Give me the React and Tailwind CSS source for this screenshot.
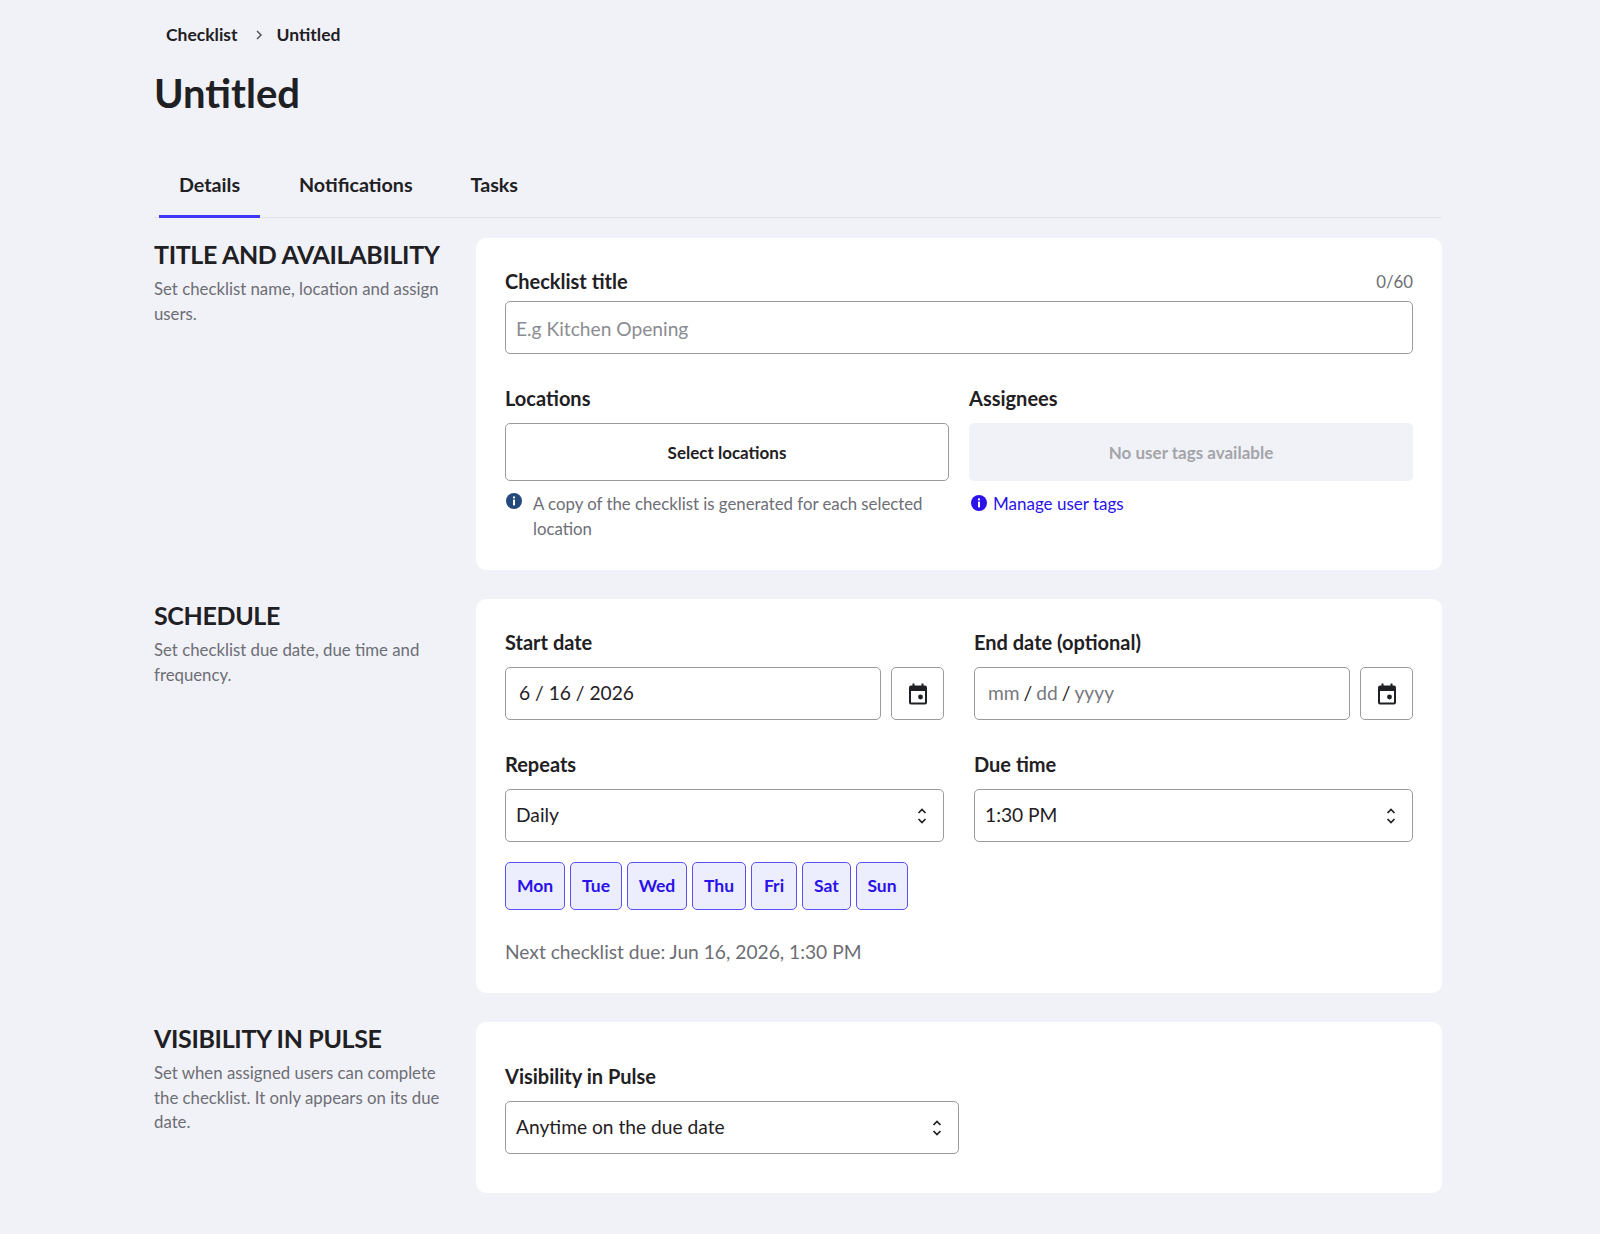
const days = [
  ['Mon', 'w-[60px]'],
  ['Tue', 'w-[52px]'],
  ['Wed', 'w-[60px]'],
  ['Thu', 'w-[54px]'],
  ['Fri', 'w-[46px]'],
  ['Sat', 'w-[49px]'],
  ['Sun', 'w-[52px]'],
];

const InfoIcon = ({ color }) => (
  <svg width="18" height="18" viewBox="0 0 18 18" className="shrink-0">
    <circle cx="9" cy="9" r="8" fill={color} />
    <circle cx="9" cy="5.4" r="1.1" fill="#fff" />
    <rect x="8" y="7.6" width="2" height="5.8" fill="#fff" />
  </svg>
);

const CalendarIcon = () => (
  <svg width="20" height="22" viewBox="0 0 20 22">
    <rect x="4.5" y="0.5" width="2" height="4" fill="#1f2024" />
    <rect x="13.5" y="0.5" width="2" height="4" fill="#1f2024" />
    <rect x="1" y="2.5" width="18" height="19" rx="2" fill="#1f2024" />
    <rect x="3" y="8" width="14" height="11.5" fill="#fff" />
    <circle cx="12.5" cy="14" r="2.4" fill="#1f2024" />
  </svg>
);

const UpDownIcon = () => (
  <svg width="10" height="18" viewBox="0 0 10 18" fill="none" stroke="#1f2024" strokeWidth="1.7">
    <path d="M1.5 6 5 2.5 8.5 6" />
    <path d="M1.5 12 5 15.5 8.5 12" />
  </svg>
);

const Label = ({ children }) => (
  <label className="block pb-[2px] text-[20px] leading-[26px] font-bold text-[#1f2024]">{children}</label>
);

const Select = ({ value, className }) => (
  <div className={`flex h-[53px] items-center justify-between rounded-[5px] border border-[#9b9b9f] bg-white pl-[10px] pr-[16px] text-[19.2px] text-[#1f2024] ${className}`}>
    <span>{value}</span>
    <UpDownIcon />
  </div>
);

const DateField = ({ children }) => (
  <div className="flex gap-[10px]">
    <div className="flex h-[53px] flex-1 items-center rounded-[5px] border border-[#9b9b9f] bg-white pl-[13px] text-[19.2px] text-[#1f2024]">
      {children}
    </div>
    <button className="flex h-[53px] w-[53px] items-center justify-center rounded-[5px] border border-[#9b9b9f] bg-white">
      <CalendarIcon />
    </button>
  </div>
);

const Section = ({ title, text, className, children }) => (
  <section className="flex">
    <div className="w-[322px] shrink-0 pr-[30px]">
      <h2 className="text-[25px] leading-[33px] font-bold tracking-[-0.35px] text-[#1f2024] whitespace-nowrap uppercase">{title}</h2>
      <p className="mt-[6px] text-[16.8px] leading-[24.5px] text-[#6d6e75]">{text}</p>
    </div>
    <div className={`flex-1 rounded-[10px] bg-white px-[29px] ${className}`}>{children}</div>
  </section>
);

export default function App() {
  return (
    <div className="min-h-[1234px] bg-[#f1f2f7] pl-[154px] pr-[158px] pt-[20px] font-['Lato',sans-serif]">
      <nav className="flex h-[30px] items-center pl-[12px] text-[17.5px] font-bold text-[#1f2024]">
        <span>Checklist</span>
        <svg width="10" height="12" viewBox="0 0 10 12" fill="none" stroke="#55565c" strokeWidth="1.5" className="ml-[16px] mr-[13px]">
          <path d="M3 2l4 4-4 4" />
        </svg>
        <span>Untitled</span>
      </nav>
      <h1 className="mt-[18px] text-[40px] leading-[50px] font-bold text-[#1f2024]">Untitled</h1>

      <div className="mt-[42px] flex h-[58px] border-b border-[#e2e3e9] pl-[5px] text-[19.7px] font-bold text-[#1f2024]">
        <div className="-mb-px flex w-[101px] justify-center rounded-t-[2px] border-b-[3px] border-[#4038f6] pt-[10px]">Details</div>
        <div className="ml-[39px] pt-[10px]">Notifications</div>
        <div className="ml-[58px] pt-[10px]">Tasks</div>
      </div>

      <div className="mt-[20px] flex flex-col gap-[29px]">
        <Section
          title="Title and availability"
          text="Set checklist name, location and assign users."
          className="h-[332px] pt-[30px]"
        >
          <div className="flex items-center justify-between">
            <Label>Checklist title</Label>
            <span className="text-[16.8px] text-[#6d6e75]">0/60</span>
          </div>
          <input
            placeholder="E.g Kitchen Opening"
            className="mt-[5px] block h-[53px] w-full rounded-[5px] border border-[#9b9b9f] bg-white px-[10px] pt-[1px] text-[19.2px] placeholder:text-[#8b8c92]"
          />
          <div className="mt-[31px] grid grid-cols-2 gap-[20px]">
            <div>
              <Label>Locations</Label>
              <button className="mt-[10px] h-[58px] w-full rounded-[5px] border border-[#9b9b9f] bg-white pt-[2px] text-[17px] font-bold text-[#1f2024]">Select locations</button>
              <div className="mt-[11px] flex gap-[10px] text-[16.8px] leading-[24.5px] text-[#6d6e75]">
                <InfoIcon color="#24497c" />
                <p>A copy of the checklist is generated for each selected location</p>
              </div>
            </div>
            <div>
              <Label>Assignees</Label>
              <div className="mt-[10px] flex h-[58px] items-center justify-center rounded-[5px] bg-[#f1f2f7] pt-[2px] text-[17px] font-bold text-[#a3a4a9]">No user tags available</div>
              <a className="mt-[10px] flex h-[24.5px] items-center gap-[5px] pl-[1px] text-[17px] text-[#2a12e8]">
                <InfoIcon color="#2a12e8" />
                Manage user tags
              </a>
            </div>
          </div>
        </Section>

        <Section
          title="Schedule"
          text="Set checklist due date, due time and frequency."
          className="h-[394px] pt-[30px]"
        >
          <div className="grid grid-cols-[439px_439px] gap-x-[30px]">
            <div>
              <Label>Start date</Label>
              <div className="mt-[10px]">
                <DateField>6 / 16 / 2026</DateField>
              </div>
            </div>
            <div>
              <Label>End date (optional)</Label>
              <div className="mt-[10px]">
                <DateField>
                  <span className="text-[#77787e]">mm</span>
                  <span className="mx-[4px]">/</span>
                  <span className="text-[#77787e]">dd</span>
                  <span className="mx-[4px]">/</span>
                  <span className="text-[#77787e]">yyyy</span>
                </DateField>
              </div>
            </div>
            <div className="mt-[31px]">
              <Label>Repeats</Label>
              <Select value="Daily" className="mt-[10px]" />
            </div>
            <div className="mt-[31px]">
              <Label>Due time</Label>
              <Select value="1:30 PM" className="mt-[10px]" />
            </div>
          </div>
          <div className="mt-[20px] flex gap-[5px]">
            {days.map(([day, width]) => (
              <button key={day} className={`h-[48px] ${width} rounded-[5px] border border-[#5a50f5] bg-[#eceefd] text-[17.5px] font-bold text-[#2a12e8]`}>{day}</button>
            ))}
          </div>
          <p className="mt-[28px] text-[19.2px] leading-[28px] text-[#6d6e75]">Next checklist due: Jun 16, 2026, 1:30 PM</p>
        </Section>

        <Section
          title="Visibility in Pulse"
          text="Set when assigned users can complete the checklist. It only appears on its due date."
          className="h-[171px] pt-[41px]"
        >
          <Label>Visibility in Pulse</Label>
          <Select value="Anytime on the due date" className="mt-[10px] w-[454px]" />
        </Section>
      </div>
    </div>
  );
}
